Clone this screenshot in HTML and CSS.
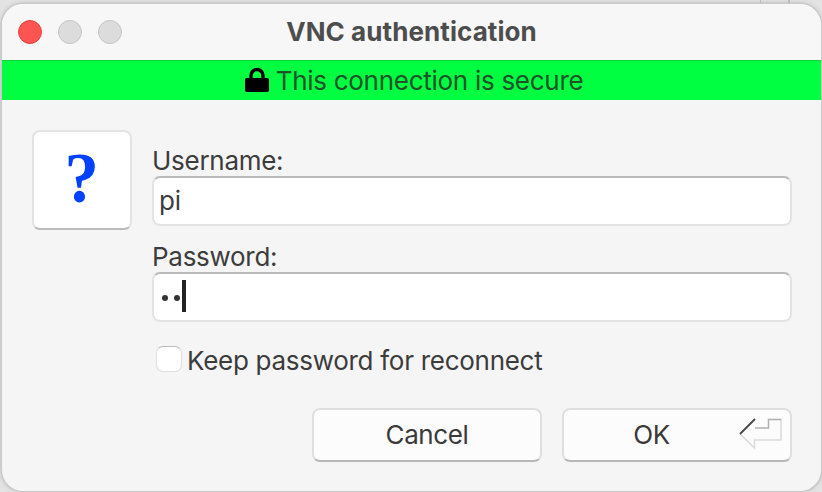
FILE: index.html
```html
<!DOCTYPE html>
<html lang="en">
<head>
<meta charset="utf-8">
<title>VNC authentication</title>
<link rel="stylesheet" href="styles.css">
</head>
<body>
<i class="backdrop-tab"></i>
<main class="window">
  <header class="titlebar">
    <div class="lights"><i class="light close"></i><i class="light"></i><i class="light"></i></div>
    <h1 class="title">VNC authentication</h1>
  </header>
  <div class="secure">
    <svg class="lock" width="24" height="25" viewBox="0 0 24 25"><path d="M6 11V7.500a6 6 0 0 1 12 0V11" fill="none" stroke="#000" stroke-width="3.400"/><rect y="10" width="24" height="14" rx="1.800"/></svg>
    <span>This connection is secure</span>
  </div>
  <form class="content">
    <div class="question"><span class="mark">?</span></div>
    <div class="fields">
      <label class="label">Username:</label>
      <div class="input">pi</div>
      <label class="label second">Password:</label>
      <div class="input"><i class="dot"></i><i class="dot"></i><i class="caret"></i></div>
      <div class="keep"><i class="checkbox"></i><span>Keep password for reconnect</span></div>
    </div>
  </form>
  <footer class="actions">
    <button class="button">Cancel</button>
    <button class="button ok"><span>OK</span>
      <svg class="return" width="44" height="32" viewBox="0 0 44 32" fill="none" stroke-width="1.500"><path d="M1 16L15.500 30V22H42V1" stroke="#dadada"/><path d="M16 10H29.500V1.500H42" stroke="#b0b0b0"/><path d="M1 16L16 1" stroke="#444" stroke-width="1.800"/></svg>
    </button>
  </footer>
</main>
</body>
</html>
```
FILE: styles.css
```css
* { box-sizing: border-box; }
body {
  margin: 0;
  width: 822px;
  height: 492px;
  overflow: hidden;
  background: #e3e3e3;
  padding: 4px 1px 1px 2px;
  font: 420 26px/30px Inter, "Liberation Sans", sans-serif;
  letter-spacing: -0.28px;
  color: #3c3c3c;
}
.backdrop-tab {
  position: absolute;
  top: 0;
  left: 760px;
  width: 30px;
  height: 3px;
  border: solid #bbb;
  border-width: 0 2px 0 1px;
}
.window {
  height: 487px;
  display: flex;
  flex-direction: column;
  background: #f5f5f5;
  border-radius: 21px;
  box-shadow: 0 0 0 1.500px #cacaca, 0 0 5px #aaa;
  overflow: hidden;
}
.titlebar {
  height: 56px;
  display: grid;
  grid-template-columns: 120px 1fr 120px;
  align-items: center;
  background: #f7f7f7;
}
.lights { display: flex; gap: 16px; padding-left: 16px; }
.light {
  width: 24px;
  height: 24px;
  border-radius: 50%;
  background: #dcdcdc;
  border: 1px solid #c4c4c4;
}
.close { background: #ff5552; border-color: #e8443f; }
.title {
  margin: 0;
  text-align: center;
  font-size: 26px;
  font-weight: 700;
  letter-spacing: 0.08px;
  color: #4d4d4d;
}
.secure {
  height: 40px;
  display: flex;
  justify-content: center;
  align-items: center;
  gap: 7px;
  padding-left: 5px;
  background: #00ff40;
  border-top: 1.500px solid #0bd33b;
  color: #1d5329;
}
.lock { fill: #000; }
.content { display: flex; gap: 20px; padding: 30px 29px 0 30px; }
.question {
  width: 100px;
  height: 100px;
  display: flex;
  justify-content: center;
  background: #fff;
  border: 2px solid #e3e3e3;
  border-bottom-color: #bbb;
  border-radius: 8px;
}
.mark {
  font: 700 71px/92px "Liberation Serif", serif;
  letter-spacing: 0;
  color: #0040ff;
  transform: scaleX(0.97);
}
.fields { flex: 1; padding-top: 16px; }
.label { display: block; height: 30px; line-height: 30px; }
.second { margin-top: 16px; }
.input {
  height: 50px;
  display: flex;
  align-items: center;
  padding-left: 5px;
  background: #fff;
  border: 2px solid #e3e3e3;
  border-top-color: #bbb;
  border-radius: 8px;
}
.dot { width: 6px; height: 6px; border-radius: 50%; background: #333; margin: 2px 3px 0; }
.caret { width: 4px; height: 32px; background: #222; margin: -2px 0 0 -1px; }
.keep { display: flex; align-items: center; gap: 5px; margin: 23px 0 0 4px; height: 32px; }
.checkbox {
  width: 26px;
  height: 26px;
  margin-top: -4px;
  background: #fff;
  border: 1.500px solid #dedede;
  border-top-color: #bbb;
  border-radius: 7px;
}
.actions { display: flex; justify-content: flex-end; gap: 20px; padding: 31px 29px 0 0; }
.button {
  width: 230px;
  height: 54px;
  padding: 0;
  display: flex;
  align-items: center;
  justify-content: center;
  background: #fcfcfc;
  border: 2px solid #dfdfdf;
  border-bottom-color: #b8b8b8;
  border-radius: 8px;
  font: inherit;
  letter-spacing: -0.4px;
  color: #3a3a3a;
}
.ok { display: grid; grid-template-columns: 175px 44px; justify-content: start; }
.return { margin-top: -2px; }
```
